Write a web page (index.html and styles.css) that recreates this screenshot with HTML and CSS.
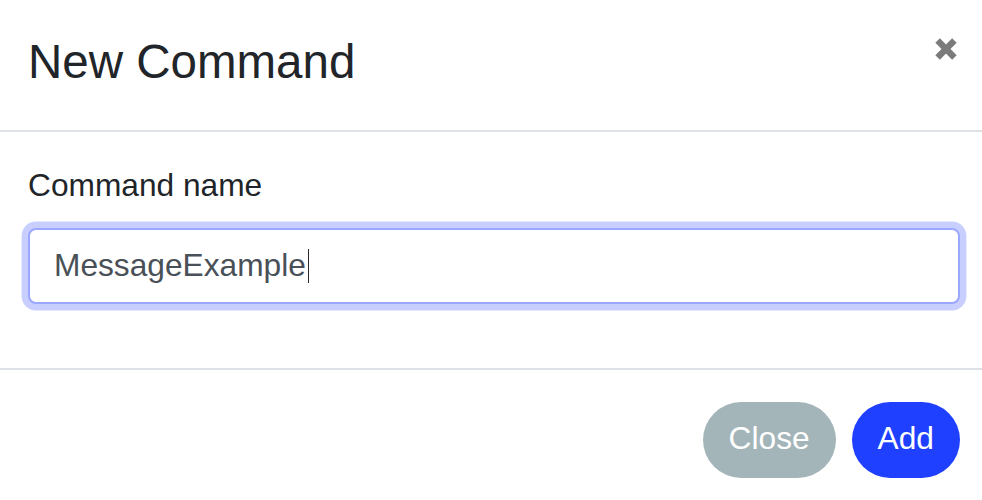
FILE: index.html
```html
<!DOCTYPE html>
<html lang="en">
<head>
<meta charset="utf-8">
<title>New Command</title>
<link rel="stylesheet" href="styles.css">
</head>
<body>
<div class="modal">
  <div class="modal-header">
    <h5 class="modal-title">New Command</h5>
    <button class="close" type="button" aria-label="Close">
      <svg class="close-icon" width="24" height="24" viewBox="0 0 24 24" aria-hidden="true">
        <path d="M3.6 3.6 L20.4 20.4 M20.4 3.6 L3.6 20.4" stroke="#7b7b7b" stroke-width="6.4" fill="none"/>
      </svg>
    </button>
  </div>
  <div class="modal-body">
    <div class="form-group">
      <label class="form-label">Command name</label>
      <div class="form-control is-focused"><span class="value">MessageExample</span><span class="caret"></span></div>
    </div>
  </div>
  <div class="modal-footer">
    <button class="btn btn-secondary" type="button">Close</button>
    <button class="btn btn-primary" type="button">Add</button>
  </div>
</div>
</body>
</html>
```
FILE: styles.css
```css
* { box-sizing: border-box; }

html, body {
  margin: 0;
  padding: 0;
  background: #ffffff;
}

body {
  font-family: "Liberation Sans", Arial, Helvetica, sans-serif;
  color: #212529;
  width: 982px;
  height: 500px;
  overflow: hidden;
}

.modal {
  display: flex;
  flex-direction: column;
}

.modal-header {
  display: flex;
  align-items: flex-start;
  justify-content: space-between;
  height: 132px;
  padding: 26px 24px 0 28px;
  border-bottom: 2px solid #dee2e6;
}

.modal-title {
  margin: 0;
  font-size: 47.5px;
  font-weight: 400;
  line-height: 71px;
  color: #212529;
}

.close {
  margin: 11px 0 0 0;
  padding: 0;
  border: 0;
  background: transparent;
  width: 24px;
  height: 24px;
  display: block;
  cursor: pointer;
}

.close-icon {
  display: block;
}

.modal-body {
  padding: 30px 22px 32px 28px;
}

.form-group {
  margin-bottom: 32px;
}

.form-label {
  display: block;
  font-size: 31.7px;
  line-height: 47.5px;
  margin-bottom: 18px;
  color: #212529;
}

.form-control {
  display: flex;
  align-items: center;
  height: 76px;
  padding: 0 24px;
  border: 2px solid #9ba8ff;
  border-radius: 8px;
  background: #ffffff;
  font-size: 31.7px;
  line-height: 47.5px;
  color: #495057;
}

.form-control.is-focused {
  box-shadow: 0 0 0 6.4px #c8cfff;
}

.caret {
  display: inline-block;
  width: 1.5px;
  height: 34px;
  margin-left: 2px;
  background: #2b2b2b;
}

.modal-footer {
  display: flex;
  justify-content: flex-end;
  gap: 16px;
  padding: 32px 22px 0 28px;
  border-top: 2px solid #dee2e6;
}

.btn {
  height: 76px;
  padding: 0 26px 3px;
  border: 0;
  border-radius: 38px;
  font-family: "Liberation Sans", Arial, Helvetica, sans-serif;
  font-size: 31.7px;
  line-height: 73px;
  color: #ffffff;
  cursor: pointer;
}

.btn-secondary {
  background: #a4b5b9;
}

.btn-primary {
  background: #1f41ff;
}
```
